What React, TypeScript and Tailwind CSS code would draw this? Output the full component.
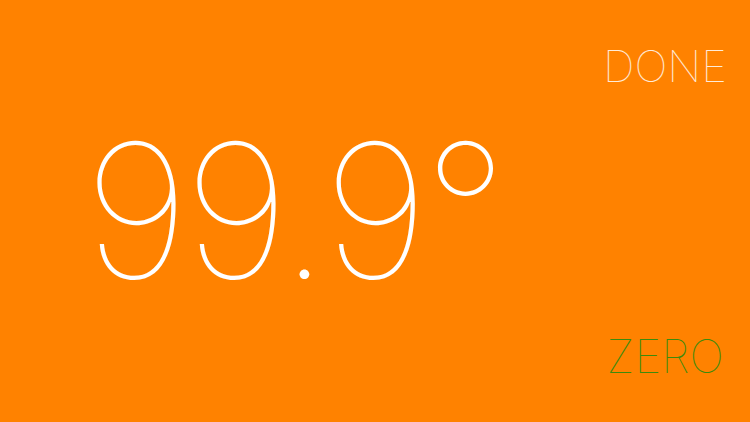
export default function App() {
  return (
    <div
      className="flex h-[422px] w-[750px] flex-col bg-[#ff8200] text-white"
      style={{ fontFamily: 'Inter, Roboto, "Helvetica Neue", sans-serif' }}
    >
      {/* ── Top: Done ── */}
      <div className="flex justify-end pr-[23px] pt-[40px]">
        <button className="text-[44px] font-thin leading-[52px] text-white/85">DONE</button>
      </div>

      {/* ── Reading ── */}
      <div className="flex pl-[84px] pt-[24px]">
        <span className="text-[186px] font-[130] leading-[190px] tracking-[-5px]">99.9°</span>
      </div>

      {/* ── Bottom: Zero ── */}
      <div className="mt-auto flex justify-end pb-[40px] pr-[26px]">
        <button className="text-[46px] font-thin leading-[52px] text-[#3d8a0c]">ZERO</button>
      </div>
    </div>
  )
}
